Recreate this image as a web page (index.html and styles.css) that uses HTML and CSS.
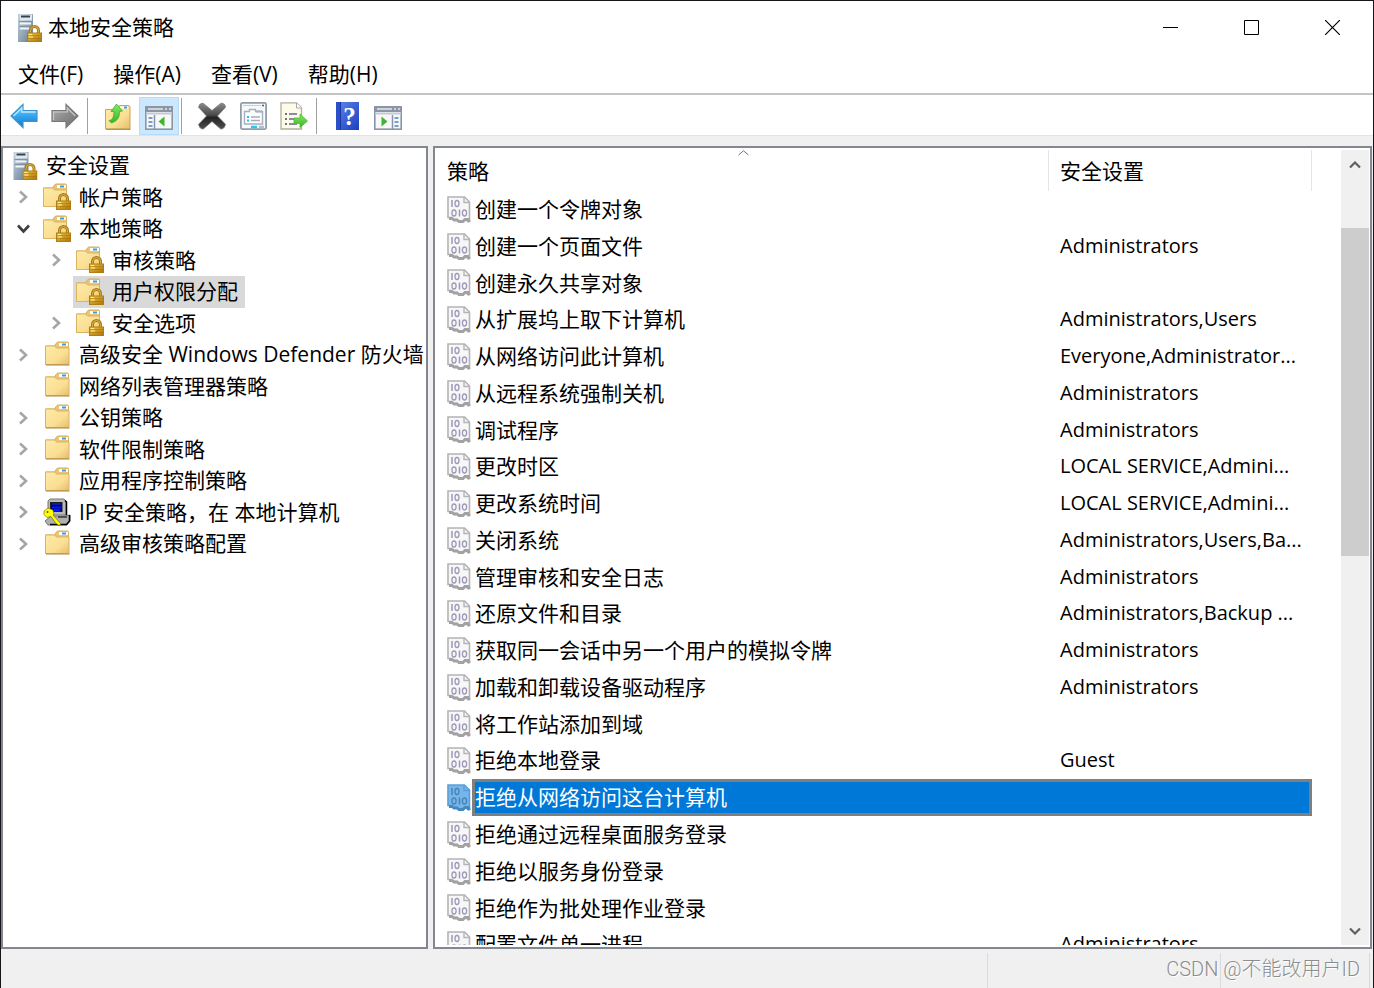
FILE: index.html
```html
<!DOCTYPE html>
<html lang="zh-CN">
<head>
<meta charset="utf-8">
<meta name="viewport" content="width=device-width, initial-scale=1">
<title>本地安全策略</title>
<link rel="stylesheet" href="styles.css">
</head>
<body>
<svg class="sprite" width="0" height="0" aria-hidden="true">
  <defs>
    <linearGradient id="g-blue" x1="0" y1="0" x2="0" y2="1"><stop offset="0" stop-color="#8fd6fb"/><stop offset=".5" stop-color="#35a4ec"/><stop offset="1" stop-color="#1277cd"/></linearGradient>
    <linearGradient id="g-gray" x1="0" y1="0" x2="1" y2="1"><stop offset="0" stop-color="#b5b5b5"/><stop offset=".5" stop-color="#8b8b8b"/><stop offset="1" stop-color="#707070"/></linearGradient>
    <linearGradient id="g-folder" x1="0" y1="0" x2="1" y2="1"><stop offset="0" stop-color="#ffeaa6"/><stop offset=".6" stop-color="#fadf94"/><stop offset="1" stop-color="#e5bd69"/></linearGradient>
    <linearGradient id="g-lock" x1="0" y1="0" x2="1" y2="1"><stop offset="0" stop-color="#f4d14a"/><stop offset=".5" stop-color="#d09a20"/><stop offset="1" stop-color="#a9750c"/></linearGradient>
    <linearGradient id="g-server" x1="0" y1="0" x2="1" y2="1"><stop offset="0" stop-color="#c6d4df"/><stop offset=".5" stop-color="#94a8b8"/><stop offset="1" stop-color="#68798a"/></linearGradient>
    <linearGradient id="g-x" x1="0" y1="0" x2="0" y2="1"><stop offset="0" stop-color="#8a8a8a"/><stop offset=".45" stop-color="#4c4c4c"/><stop offset=".55" stop-color="#242424"/><stop offset="1" stop-color="#505050"/></linearGradient>
    <linearGradient id="g-help" x1="0" y1="0" x2="1" y2="1"><stop offset="0" stop-color="#5e85ee"/><stop offset="1" stop-color="#1d3fc0"/></linearGradient>
    <linearGradient id="g-green" x1="0" y1="0" x2="0" y2="1"><stop offset="0" stop-color="#8be86a"/><stop offset="1" stop-color="#35b51e"/></linearGradient>
  </defs>
  <symbol id="lock" viewBox="0 0 15 17">
    <path d="M3.500 9V5.500a4 4 0 0 1 8 0V9" fill="none" stroke="#a77b18" stroke-width="3"/>
    <path d="M3.500 9V5.500a4 4 0 0 1 8 0V9" fill="none" stroke="#dfb248" stroke-width="1"/>
    <rect x=".5" y="8" width="14" height="8.500" fill="url(#g-lock)" stroke="#b27d10"/>
    <path d="M1 10.500h13M1 13.500h13" stroke="#8f6508" stroke-opacity=".4"/>
    <path d="M2 9.500h3M2 12h4" stroke="#fff0a0"/>
  </symbol>
  <symbol id="i-server" viewBox="0 0 24 28">
    <path d="M0 0h15v28H0z" fill="url(#g-server)"/>
    <path d="M2 .5h12v6H2z" fill="#dfe8ee"/>
    <path d="M3 2.500h9" stroke="#304450" stroke-width="2"/>
    <path d="M1 7.500h13M1 12.500h13" stroke="#8093a2"/>
    <path d="M2 9.500h11M2 14.500h9" stroke="#eef4f8" stroke-width="2"/>
    <circle cx="12.500" cy="14.500" r="1" fill="#58d85a"/>
    <use href="#lock" x="9" y="11" width="15" height="17"/>
  </symbol>
  <symbol id="i-folder" viewBox="0 0 28 27">
    <path d="M2.500 4.500h9l2-3q.6-1 1.800-1h9q1.200 0 1.200 1.200V23H2.500z" fill="#e9c676" stroke="#d5ad5c"/>
    <rect x="16" y="1.500" width="9" height="3" fill="#fffef5"/><rect x="19" y="2" width="4" height="2" fill="#3b9be4"/>
    <path d="M2.500 4.500h9l2 2h12.500V23H2.500z" fill="url(#g-folder)" stroke="#dab365"/>
    <path d="M3 23.500h23.500" stroke="#aa8541"/>
  </symbol>
  <symbol id="i-folder-lock" viewBox="0 0 28 27">
    <path d="M.5 4.500h9l2-3q.6-1 1.800-1h9q1.200 0 1.200 1.200V23H.5z" fill="#e9c676" stroke="#d5ad5c"/>
    <rect x="14" y="1.500" width="9" height="3" fill="#fffef5"/><rect x="17" y="2" width="4" height="2" fill="#3b9be4"/>
    <path d="M.5 4.500h9l2 2h12V23H.5z" fill="url(#g-folder)" stroke="#dab365"/>
    <use href="#lock" x="13" y="9.500" width="15" height="17"/>
  </symbol>
  <symbol id="i-ipsec" viewBox="0 0 28 28">
    <path d="M7 1h14l2 2v14H5V3z" fill="#b9b9b9" stroke="#777"/>
    <path d="M22 2.500l1.500 1.500v13.500" fill="none" stroke="#000" stroke-width="1.500"/>
    <rect x="7.500" y="4.500" width="11.500" height="9" fill="#000080" stroke="#222"/>
    <path d="M9 9.500h9M11 12h6" stroke="#0019ff" stroke-width="2"/><path d="M9 6h9" stroke="#1040b8"/>
    <path d="M8 18h13l6-1v6l-3 4H5l-3-4z" fill="#b0b0b0" stroke="#777"/>
    <path d="M26.500 17v6l-3 3.500H7" fill="none" stroke="#000" stroke-width="1.500"/><path d="M15 19h9" stroke="#000"/>
    <path d="M1 13l4-3 5 2 1 4-1 1 8 9-2 1.500-3-2-5-7-4 1-3-3z" fill="#ffff00" stroke="#5e5e00" stroke-width=".6"/>
    <circle cx="4.500" cy="14" r="1" fill="#555"/>
  </symbol>
  <symbol id="i-policy" viewBox="0 0 24 27">
    <path d="M1 1h16.500l5 5v19.500h-2l-1-2h-2l-2 2h-3.500l-2-2H6.500l-1.500-2H1z" fill="var(--page-fill)" stroke="var(--page-edge)" stroke-width="1.600"/>
    <path d="M17 1v5.500h5.500" fill="none" stroke="var(--page-edge)" stroke-width="1.400"/>
    <path d="M2 22.500h3l2 1.500h3l2 1.500h4l2-2h3l1.500 2.500" fill="none" stroke="var(--page-shade)" stroke-width="2.800"/>
    <path d="M5 4v7M12.500 13.500v7" stroke="var(--page-ink)" stroke-width="1.500"/>
    <ellipse cx="10" cy="7.500" rx="2" ry="3" fill="none" stroke="var(--page-ink)" stroke-width="1.300"/>
    <ellipse cx="7" cy="17" rx="2.100" ry="3" fill="none" stroke="var(--page-ink)" stroke-width="1.300"/>
    <ellipse cx="17.500" cy="17" rx="2.100" ry="3" fill="none" stroke="var(--page-ink)" stroke-width="1.300"/>
  </symbol>
  <symbol id="i-back" viewBox="0 0 28 26">
    <path d="M1 13L13 1.500V7.500h14v11H13v6z" fill="url(#g-blue)" stroke="#3f93cc" stroke-width="1.200"/>
    <path d="M3.500 13L11.800 5V9h13.700" fill="none" stroke="#b9ebff" stroke-width="1.300"/>
  </symbol>
  <symbol id="i-forward" viewBox="0 0 28 26">
    <path d="M27 13L15 1.500V7.500H1v11h14v6z" fill="url(#g-gray)" stroke="#777" stroke-width="1.200"/>
    <path d="M2.500 17V9H16.300V5l8 8" fill="none" stroke="#c7c7c7" stroke-width="1.200"/>
  </symbol>
  <symbol id="i-up" viewBox="0 0 26 27">
    <path d="M.5 6.500h12l2-4h9.500l1 1.500v22H.5z" fill="url(#g-folder)" stroke="#caa35a"/>
    <path d="M15 4.500h8" stroke="#fffef2" stroke-width="2"/><path d="M19 4.500h3" stroke="#3b9be4" stroke-width="2"/>
    <path d="M1 26.300h24.500" stroke="#aa8541"/>
    <path d="M4 17.500q5 0 5-9H6L11.500 1l6 7-3 .5q.5 9-8 11.500z" fill="url(#g-green)" stroke="#3fae2b" stroke-width=".8"/>
  </symbol>
  <symbol id="i-panel" viewBox="0 0 28 24">
    <rect x=".8" y=".8" width="26.400" height="22.400" fill="#f7f8fa" stroke="#8b95a5" stroke-width="1.600"/>
    <path d="M1 3.500h26" stroke="#8b95a5" stroke-width="5"/><path d="M3 3h15M20 3h2M24 3h2" stroke="#e3e8ef" stroke-width="1.500"/>
    <path d="M1 7.500h26" stroke="#c4cad4" stroke-width="2"/>
  </symbol>
  <symbol id="i-tree" viewBox="0 0 28 24">
    <use href="#i-panel" width="28" height="24"/>
    <path d="M9.500 9v14" stroke="#8b95a5" stroke-width="1.500"/>
    <path d="M3.500 12h4M3.500 16h4M3.500 20h4" stroke="#4a83c4" stroke-width="1.700"/>
    <path d="M19.500 10.500v10L13.500 15.500z" fill="#3fb52c"/>
  </symbol>
  <symbol id="i-actions" viewBox="0 0 28 24">
    <use href="#i-panel" width="28" height="24"/>
    <path d="M18.500 9v14" stroke="#8b95a5" stroke-width="1.500"/>
    <path d="M20.500 12h4M20.500 16h4M20.500 20h4" stroke="#4a83c4" stroke-width="1.700"/>
    <path d="M7.500 10.500v10L13.500 15.500z" fill="#3fb52c"/>
  </symbol>
  <symbol id="i-delete" viewBox="0 0 28 28">
    <path d="M5 1.200l9 7.300 9-7.300q4-.2 4.500 4l-8 8.800 8 8.300q-.5 4.200-4.500 4.900L14 19.500l-9 7.700Q1 26.500.6 22.300L8.500 14 .6 5.200q.4-4 4.400-4z" fill="url(#g-x)" stroke="#777" stroke-width=".8"/>
  </symbol>
  <symbol id="i-properties" viewBox="0 0 27 28">
    <rect x=".9" y=".9" width="25.200" height="26.200" rx="1.500" fill="#f7f9fb" stroke="#929daa" stroke-width="1.800"/>
    <path d="M3 3.500h18" stroke="#c6ced8"/><path d="M22 3.500h2" stroke="#4d5d70" stroke-width="1.500"/>
    <path d="M4.500 9.500h5v-2h6v2h7V22h-18z" fill="#fff" stroke="#a5afbd" stroke-width="1.400"/>
    <path d="M16 9.500h6" stroke="#a5afbd" stroke-width="2"/>
    <path d="M7 15h2M7 18.500h2" stroke="#28bde0" stroke-width="2"/><path d="M11 15h9M11 18.500h9" stroke="#a5adb8" stroke-width="1.400"/>
    <path d="M11 25h6" stroke="#27c7ee" stroke-width="2.500"/><path d="M19 25h5" stroke="#b4bdc8" stroke-width="2.500"/>
  </symbol>
  <symbol id="i-export" viewBox="0 0 28 28">
    <path d="M1 .8h15.500l5 5V27H1z" fill="#fdfbe9" stroke="#b3ae9c" stroke-width="1.300"/>
    <path d="M16.500 1v5h5" fill="#fff" stroke="#aaa"/>
    <path d="M5 12h2M5 17h2M5 22h2" stroke="#444" stroke-width="1.600"/><path d="M9 12h8M9 17h8M9 22h8" stroke="#6a648a" stroke-width="1.400"/>
    <path d="M14 16h6v-4l7.500 7-7.500 6.500V21.500h-6z" fill="url(#g-green)" stroke="#4dbb35" stroke-width=".8"/>
  </symbol>
  <symbol id="i-help" viewBox="0 0 23 28">
    <path d="M0 0h23v28H0z" fill="url(#g-help)"/><path d="M0 0h4.500v28H0z" fill="#2b4fc7"/><path d="M4.500 0v28" stroke="#15359f"/>
    <text class="help-mark" x="13.500" y="23" text-anchor="middle">?</text>
  </symbol>
  <symbol id="i-chevron" viewBox="0 0 11 14"><path d="M2 1.500L8 7l-6 5.500" fill="none" stroke="currentColor" stroke-width="2.600"/></symbol>
  <symbol id="i-caret" viewBox="0 0 12 8"><path d="M1 6.500L6 1.500l5 5" fill="none" stroke="currentColor" stroke-width="2.200"/></symbol>
</svg>

<div class="window">
  <header class="titlebar">
    <svg class="app-icon"><use href="#i-server"/></svg>
    <h1 class="title">本地安全策略</h1>
    <div class="controls">
      <button class="control" aria-label="最小化"><svg width="15" height="15"><path d="M0 7.500h15" stroke="#000"/></svg></button>
      <button class="control" aria-label="最大化"><svg width="15" height="15"><path d="M.5.5h14v14H.5z" fill="none" stroke="#000"/></svg></button>
      <button class="control" aria-label="关闭"><svg width="15" height="15"><path d="M0 0l15 15M15 0L0 15" stroke="#000" stroke-width="1.200"/></svg></button>
    </div>
  </header>
  <nav class="menubar">
    <button class="menu">文件(F)</button>
    <button class="menu">操作(A)</button>
    <button class="menu">查看(V)</button>
    <button class="menu">帮助(H)</button>
  </nav>
  <div class="toolbar" role="toolbar">
    <button class="tool" aria-label="后退"><svg width="28" height="26"><use href="#i-back"/></svg></button>
    <button class="tool" aria-label="前进"><svg width="28" height="26"><use href="#i-forward"/></svg></button>
    <span class="separator"></span>
    <button class="tool" aria-label="向上"><svg width="26" height="27"><use href="#i-up"/></svg></button>
    <button class="tool low active" aria-label="显示控制台树"><svg width="28" height="24"><use href="#i-tree"/></svg></button>
    <span class="separator"></span>
    <button class="tool" aria-label="删除"><svg width="28" height="28"><use href="#i-delete"/></svg></button>
    <button class="tool" aria-label="属性"><svg width="27" height="28"><use href="#i-properties"/></svg></button>
    <button class="tool" aria-label="导出列表"><svg width="28" height="28"><use href="#i-export"/></svg></button>
    <span class="separator"></span>
    <button class="tool" aria-label="帮助"><svg width="23" height="28"><use href="#i-help"/></svg></button>
    <button class="tool low" aria-label="显示操作窗格"><svg width="28" height="24"><use href="#i-actions"/></svg></button>
  </div>

  <main class="workspace">
    <nav class="pane tree-pane">
      <div class="root-row"><svg class="root-icon"><use href="#i-server"/></svg>安全设置</div>
      <ul class="tree">
        <li><div class="node"><button class="twist" aria-label="展开"><svg><use href="#i-chevron"/></svg></button><a class="item" href="#"><svg><use href="#i-folder-lock"/></svg>帐户策略</a></div></li>
        <li><div class="node"><button class="twist open" aria-label="折叠"><svg><use href="#i-chevron"/></svg></button><a class="item" href="#"><svg><use href="#i-folder-lock"/></svg>本地策略</a></div>
          <ul class="tree nested">
            <li><div class="node"><button class="twist" aria-label="展开"><svg><use href="#i-chevron"/></svg></button><a class="item" href="#"><svg><use href="#i-folder-lock"/></svg>审核策略</a></div></li>
            <li><div class="node"><span class="twist"></span><a class="item selected" href="#"><svg><use href="#i-folder-lock"/></svg>用户权限分配</a></div></li>
            <li><div class="node"><button class="twist" aria-label="展开"><svg><use href="#i-chevron"/></svg></button><a class="item" href="#"><svg><use href="#i-folder-lock"/></svg>安全选项</a></div></li>
          </ul>
        </li>
        <li><div class="node"><button class="twist" aria-label="展开"><svg><use href="#i-chevron"/></svg></button><a class="item" href="#"><svg><use href="#i-folder"/></svg>高级安全 Windows Defender 防火墙</a></div></li>
        <li><div class="node"><span class="twist"></span><a class="item" href="#"><svg><use href="#i-folder"/></svg>网络列表管理器策略</a></div></li>
        <li><div class="node"><button class="twist" aria-label="展开"><svg><use href="#i-chevron"/></svg></button><a class="item" href="#"><svg><use href="#i-folder"/></svg>公钥策略</a></div></li>
        <li><div class="node"><button class="twist" aria-label="展开"><svg><use href="#i-chevron"/></svg></button><a class="item" href="#"><svg><use href="#i-folder"/></svg>软件限制策略</a></div></li>
        <li><div class="node"><button class="twist" aria-label="展开"><svg><use href="#i-chevron"/></svg></button><a class="item" href="#"><svg><use href="#i-folder"/></svg>应用程序控制策略</a></div></li>
        <li><div class="node"><button class="twist" aria-label="展开"><svg><use href="#i-chevron"/></svg></button><a class="item" href="#"><svg><use href="#i-ipsec"/></svg>IP 安全策略，在 本地计算机</a></div></li>
        <li><div class="node"><button class="twist" aria-label="展开"><svg><use href="#i-chevron"/></svg></button><a class="item" href="#"><svg><use href="#i-folder"/></svg>高级审核策略配置</a></div></li>
      </ul>
    </nav>

    <section class="pane list-pane">
      <div class="list">
        <table class="policies">
          <thead>
            <tr><th scope="col">策略<svg class="sort"><path d="M.5 5L5.500.8 10.500 5" fill="none" stroke="#777"/></svg></th><th scope="col">安全设置</th></tr>
          </thead>
          <tbody>
            <tr><td><svg><use href="#i-policy"/></svg><span>创建一个令牌对象</span></td><td></td></tr>
            <tr><td><svg><use href="#i-policy"/></svg><span>创建一个页面文件</span></td><td>Administrators</td></tr>
            <tr><td><svg><use href="#i-policy"/></svg><span>创建永久共享对象</span></td><td></td></tr>
            <tr><td><svg><use href="#i-policy"/></svg><span>从扩展坞上取下计算机</span></td><td>Administrators,Users</td></tr>
            <tr><td><svg><use href="#i-policy"/></svg><span>从网络访问此计算机</span></td><td>Everyone,Administrator...</td></tr>
            <tr><td><svg><use href="#i-policy"/></svg><span>从远程系统强制关机</span></td><td>Administrators</td></tr>
            <tr><td><svg><use href="#i-policy"/></svg><span>调试程序</span></td><td>Administrators</td></tr>
            <tr><td><svg><use href="#i-policy"/></svg><span>更改时区</span></td><td>LOCAL SERVICE,Admini...</td></tr>
            <tr><td><svg><use href="#i-policy"/></svg><span>更改系统时间</span></td><td>LOCAL SERVICE,Admini...</td></tr>
            <tr><td><svg><use href="#i-policy"/></svg><span>关闭系统</span></td><td>Administrators,Users,Ba...</td></tr>
            <tr><td><svg><use href="#i-policy"/></svg><span>管理审核和安全日志</span></td><td>Administrators</td></tr>
            <tr><td><svg><use href="#i-policy"/></svg><span>还原文件和目录</span></td><td>Administrators,Backup ...</td></tr>
            <tr><td><svg><use href="#i-policy"/></svg><span>获取同一会话中另一个用户的模拟令牌</span></td><td>Administrators</td></tr>
            <tr><td><svg><use href="#i-policy"/></svg><span>加载和卸载设备驱动程序</span></td><td>Administrators</td></tr>
            <tr><td><svg><use href="#i-policy"/></svg><span>将工作站添加到域</span></td><td></td></tr>
            <tr><td><svg><use href="#i-policy"/></svg><span>拒绝本地登录</span></td><td>Guest</td></tr>
            <tr class="current"><td><svg><use href="#i-policy"/></svg><span>拒绝从网络访问这台计算机</span></td><td></td></tr>
            <tr><td><svg><use href="#i-policy"/></svg><span>拒绝通过远程桌面服务登录</span></td><td></td></tr>
            <tr><td><svg><use href="#i-policy"/></svg><span>拒绝以服务身份登录</span></td><td></td></tr>
            <tr><td><svg><use href="#i-policy"/></svg><span>拒绝作为批处理作业登录</span></td><td></td></tr>
            <tr><td><svg><use href="#i-policy"/></svg><span>配置文件单一进程</span></td><td>Administrators</td></tr>
          </tbody>
        </table>
      </div>
      <div class="scrollbar">
        <button class="step" aria-label="向上滚动"><svg><use href="#i-caret"/></svg></button>
        <div class="track"><div class="thumb"></div></div>
        <button class="step down" aria-label="向下滚动"><svg><use href="#i-caret"/></svg></button>
      </div>
    </section>
  </main>

  <footer class="statusbar">
    <span class="status"></span>
    <span class="status middle"></span>
    <span class="status last"></span>
    <span class="watermark">CSDN @不能改用户ID</span>
  </footer>
</div>
</body>
</html>
```

FILE: styles.css
```css
* { box-sizing: border-box; }

body {
  margin: 0;
  background: #f0f0f0;
  color: #000;
  font-family: "Open Sans", "Noto Sans CJK SC", sans-serif;
  font-size: 21px;
  line-height: 1.5;
}

button {
  margin: 0;
  padding: 0;
  border: 0;
  background: none;
  color: inherit;
  font: inherit;
}

svg { display: block; flex: none; }
.sprite { position: absolute; }

.help-mark {
  fill: #fff;
  font: bold 25px "Liberation Serif", serif;
}

.window {
  display: flex;
  flex-direction: column;
  height: 100vh;
  border: 1px solid #15151a;
  border-bottom: 0;
}

/* Title bar and menus */
.titlebar {
  display: flex;
  align-items: center;
  height: 53px;
  padding-left: 17px;
  background: #fff;
}
.app-icon { width: 24px; height: 28px; }
.title {
  flex: 1;
  margin: 0 0 0 6px;
  font-size: 21px;
  font-weight: 400;
}
.controls { display: flex; }
.control {
  display: grid;
  place-items: center;
  width: 81px;
  height: 53px;
}

.menubar {
  display: flex;
  gap: 30px;
  height: 41px;
  padding: 5px 17px 0;
  border-bottom: 2px solid #c4c4c4;
  background: #fff;
}
.menu { height: 32px; white-space: nowrap; }

/* Toolbar */
.toolbar {
  display: flex;
  align-items: center;
  gap: 1px;
  height: 41px;
  padding: 2px 3px 0;
  border-bottom: 1px solid #e3e3e3;
  background: #fff;
}
.tool {
  display: grid;
  place-items: center;
  width: 40px;
  height: 38px;
}
.tool.low { padding-top: 4px; }
.tool.active {
  border: 1px solid #b5dcfb;
  background: #cce8ff;
}
.separator {
  width: 1px;
  height: 36px;
  margin: 0 9px 0 1px;
  background: #a0a0a0;
}

/* Panes */
.workspace {
  display: grid;
  grid-template-columns: 427px minmax(0, 1fr);
  grid-template-rows: minmax(0, 1fr);
  gap: 5px;
  flex: 1;
  min-height: 0;
  padding: 10px 1px 0 0;
}
.pane {
  overflow: hidden;
  border: 2px solid #828790;
  background: #fff;
}

.tree-pane { padding-top: 2px; white-space: nowrap; }
.root-row {
  display: flex;
  align-items: center;
  gap: 8px;
  padding-left: 10px;
}
.root-icon { width: 25px; height: 28px; }
.tree {
  margin: 0;
  padding: 0;
  list-style: none;
}
.nested { padding-left: 33px; }
.node { display: flex; }
.twist {
  display: flex;
  flex: none;
  align-items: center;
  width: 37px;
  padding-left: 15px;
  color: #a6a6a6;
}
.twist svg { width: 11px; height: 14px; }
.twist.open { color: #404040; }
.twist.open svg { transform: rotate(90deg); }
.item {
  display: flex;
  align-items: center;
  gap: 8px;
  padding: 0 7px 0 3px;
  color: inherit;
  text-decoration: none;
}
.item svg { width: 28px; height: 28px; }
.item.selected { background: #d9d9d9; }

.list-pane {
  display: flex;
  padding: 2px 1px 2px 2px;
}
.list {
  flex: 1;
  min-width: 0;
  overflow: hidden;
}
.policies {
  --page-fill: #f7f7f8;
  --page-edge: #b4b4b6;
  --page-shade: #a2a2a4;
  --page-ink: #9d98b8;
  display: block;
  margin-right: 29px;
  white-space: nowrap;
}
.policies thead,
.policies tbody { display: block; }
.policies tr {
  display: grid;
  grid-template-columns: minmax(0, 1fr) 263px;
  line-height: 1.75;
}
.policies th {
  position: relative;
  height: 41px;
  padding: 3px 10px 0;
  border-right: 1px solid #e5e5e5;
  font-weight: 400;
  text-align: left;
}
.sort {
  position: absolute;
  top: 0;
  left: 50%;
  width: 11px;
  height: 6px;
  margin-left: -5px;
}
.policies td { padding: 0 0 0 11px; }
.policies td:first-child {
  display: flex;
  align-items: center;
  padding-left: 10px;
}
.policies td:last-child { font-size: 20px; line-height: 36px; }
.policies tr > :last-child { padding-left: 11px; }
.policies td svg {
  width: 24px;
  height: 27px;
  margin-right: 1px;
}
.policies td span { flex: 1; padding-left: 3px; }
.policies .current {
  --page-fill: #76b5e8;
  --page-edge: #5aa0d8;
  --page-shade: #4388c0;
  --page-ink: #4682bb;
}
.policies .current td span,
.policies .current td:last-child {
  border: solid #7f7f7f;
  background: #0078d7;
  color: #fff;
}
.policies .current td span {
  padding-left: 0;
  border-width: 3px 0 3px 3px;
  line-height: 31px;
}
.policies .current td:last-child { border-width: 3px 3px 3px 0; }

.scrollbar {
  display: flex;
  flex-direction: column;
  width: 28px;
  background: #f0f0f0;
}
.step {
  display: grid;
  place-items: center;
  height: 29px;
  color: #606060;
}
.step svg { width: 12px; height: 8px; }
.step.down svg { transform: rotate(180deg); }
.track {
  display: grid;
  flex: 1;
  grid-template-rows: 49fr 328fr 360fr;
}
.thumb { grid-row: 2; background: #cdcdcd; }

/* Status bar */
.statusbar {
  position: relative;
  display: flex;
  height: 39px;
  padding: 4px 3px 0 0;
}
.status { flex: 1; border-right: 1px solid #dadada; }
.status.middle { flex: none; width: 233px; }
.status.last { flex: none; width: 149px; }
.watermark {
  position: absolute;
  right: 13px;
  bottom: 4px;
  color: #8c8c8c;
  font-family: Roboto, "Noto Sans CJK SC", sans-serif;
  font-size: 20px;
  font-weight: 300;
  text-shadow: 1px 1px 0 #fff;
}
```
